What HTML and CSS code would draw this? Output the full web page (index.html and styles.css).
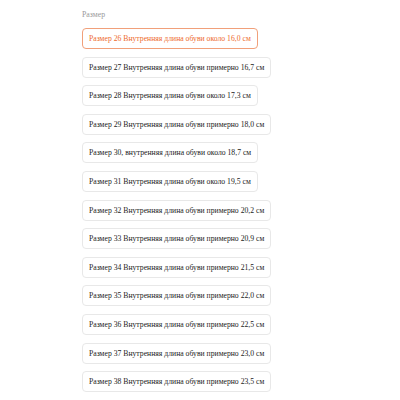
FILE: index.html
```html
<!DOCTYPE html>
<html lang="ru">
<head>
<meta charset="utf-8">
<link rel="stylesheet" href="styles.css">
</head>
<body>
<div class="page">
  <div class="field">
    <div class="label">Размер</div>
    <div class="options">
      <button class="opt active">Размер 26 Внутренняя длина обуви около 16,0 см</button>
      <button class="opt">Размер 27 Внутренняя длина обуви примерно 16,7 см</button>
      <button class="opt">Размер 28 Внутренняя длина обуви около 17,3 см</button>
      <button class="opt">Размер 29 Внутренняя длина обуви примерно 18,0 см</button>
      <button class="opt">Размер 30, внутренняя длина обуви около 18,7 см</button>
      <button class="opt">Размер 31 Внутренняя длина обуви около 19,5 см</button>
      <button class="opt">Размер 32 Внутренняя длина обуви примерно 20,2 см</button>
      <button class="opt">Размер 33 Внутренняя длина обуви примерно 20,9 см</button>
      <button class="opt">Размер 34 Внутренняя длина обуви примерно 21,5 см</button>
      <button class="opt">Размер 35 Внутренняя длина обуви примерно 22,0 см</button>
      <button class="opt">Размер 36 Внутренняя длина обуви примерно 22,5 см</button>
      <button class="opt">Размер 37 Внутренняя длина обуви примерно 23,0 см</button>
      <button class="opt">Размер 38 Внутренняя длина обуви примерно 23,5 см</button>
    </div>
  </div>
</div>
</body>
</html>
```
FILE: styles.css
```css
html, body {
  margin: 0;
  padding: 0;
  background: #fff;
}
.page {
  width: 400px;
  height: 400px;
  overflow: hidden;
  padding: 9px 0 0 82px;
  box-sizing: border-box;
  font-family: "Liberation Serif", "DejaVu Serif", serif;
}
.label {
  font-family: "Liberation Serif", "DejaVu Serif", serif;
  font-size: 7.8px;
  line-height: 11px;
  color: #999;
  margin-bottom: 8px;
}
.options {
  display: flex;
  flex-direction: column;
  align-items: flex-start;
  gap: 7.6px;
}
.opt {
  font-family: "Liberation Serif", "DejaVu Serif", serif;
  font-size: 7.7px;
  line-height: 11px;
  color: #222;
  background: #fff;
  border: 1px solid #e8e8e8;
  border-radius: 4px;
  padding: 4px 6px;
  margin: 0;
  white-space: nowrap;
}
.opt.active {
  color: #ee6a2c;
  border-color: #f1a07a;
}
```
